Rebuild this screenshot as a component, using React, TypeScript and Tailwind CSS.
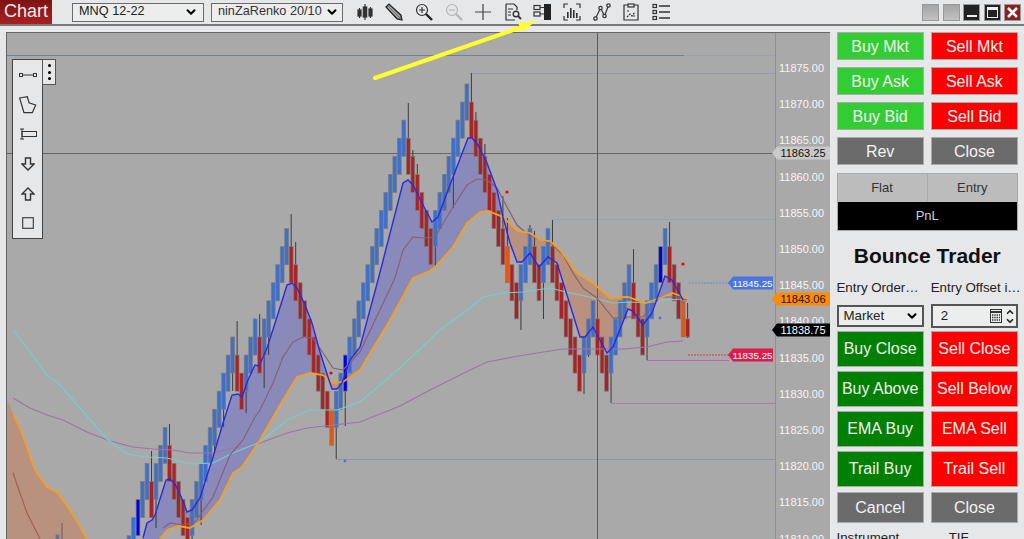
import { ChevronDown, ChevronUp } from "lucide-react";
import type { ReactNode } from "react";

type Pt = [number, number];

// renko brick tops, in steps of one brick from the highest one
const tops = [
  25, 24, 23, 22, 21, 22, 21, 20, 19, 20, 21, 22, 23, 24, 23, 22, 21, 20, 19, 18, 17, 16, 15, 14, 15, 16, 15, 14, 13, 14, 13, 12, 11, 10, 9, 8, 9, 10, 11, 12, 13, 14, 15, 16, 17, 18, 17, 16, 15, 14, 13, 12,
  11, 10, 9, 8, 7, 6, 5, 4, 3, 2, 3, 4, 5, 6, 7, 8, 7, 6, 5, 4, 3, 2, 1, 0, 1, 2, 3, 4, 5, 6, 7, 8, 9,
  10, 11, 10, 9, 8, 9, 10, 9, 8, 9, 10, 11, 12, 13, 14, 15, 14, 13, 12, 13, 14, 15, 14, 13, 12, 11, 10, 11, 12, 13, 12, 11, 10, 9, 8, 9, 10, 11, 12, 13,
];
const wickTop: Record<number, number> = { 5: 451, 9: 424, 24: 321, 29: 314, 36: 214, 37: 242, 62: 103, 63: 150, 64: 164, 76: 73, 77: 112, 79: 144, 83: 196, 84: 218, 89: 225, 90: 231, 94: 220, 112: 249, 120: 222, 124: 303 };
const wickBot: Record<number, number> = { 6: 528, 14: 545, 16: 525, 19: 451, 21: 427, 23: 391, 26: 413, 30: 388, 31: 355, 46: 459, 47: 410, 48: 426, 68: 267, 72: 208, 87: 330, 92: 319, 101: 394, 102: 357, 107: 403, 115: 360, 124: 338 };
const bright = [2, 48, 118];
const hot = [45, 84, 123];

const blue: Pt[] = [[6, 620], [130, 620], [143, 538], [147, 523], [152, 520], [155, 515], [166, 480], [170, 479], [175, 484], [183, 501], [187, 512], [192, 510], [200, 498], [205, 482], [213, 457], [223, 423], [232, 395], [238, 394], [242, 397], [248, 380], [255, 365], [259, 366], [267, 348], [277, 317], [287, 285], [292, 283], [297, 288], [305, 305], [312, 323], [320, 352], [328, 377], [332, 389], [337, 389], [342, 383], [350, 360], [360, 347], [378, 280], [403, 183], [408, 180], [413, 185], [422, 203], [432, 222], [438, 217], [453, 177], [468, 138], [472, 138], [478, 145], [487, 163], [497, 190], [503, 217], [510, 243], [517, 262], [522, 262], [530, 253], [539, 267], [548, 257], [557, 263], [580, 337], [585, 337], [593, 327], [607, 353], [613, 347], [628, 309], [633, 311], [643, 325], [652, 313], [665, 276], [672, 280], [683, 300]];
const orange: Pt[] = [[6, 398], [13, 413], [22, 433], [35, 470], [47, 487], [58, 493], [72, 513], [87, 539], [110, 620], [150, 620], [160, 539], [167, 530], [178, 526], [190, 528], [203, 520], [220, 500], [233, 473], [242, 467], [260, 440], [283, 400], [297, 377], [310, 373], [323, 375], [333, 383], [343, 382], [360, 370], [390, 320], [413, 278], [430, 271], [435, 267], [453, 247], [467, 223], [480, 212], [488, 211], [503, 217], [517, 231], [530, 233], [540, 240], [550, 241], [560, 250], [577, 273], [593, 283], [610, 298], [628, 297], [645, 303], [660, 298], [672, 293], [687, 298]];
const mid: Pt[] = [[163, 528], [170, 523], [183, 525], [195, 522], [213, 497], [230, 455], [243, 440], [255, 417], [260, 410], [273, 383], [283, 357], [293, 342], [303, 337], [313, 338], [323, 353], [333, 368], [343, 370], [360, 352], [395, 278], [403, 250], [413, 237], [423, 238], [435, 237], [453, 207], [467, 185], [477, 179], [487, 180], [497, 188], [507, 207], [517, 225], [525, 232], [540, 240], [550, 242], [563, 255], [573, 273], [583, 288], [597, 298], [613, 318], [625, 317], [643, 317], [660, 297], [677, 297], [687, 300]];
const midLeft: Pt[] = [[13, 473], [27, 513], [40, 539]];
const cyan: Pt[] = [[13, 330], [30, 352], [47, 375], [58, 383], [80, 408], [107, 439], [127, 454], [147, 457], [167, 458], [190, 464], [213, 463], [233, 453], [260, 442], [287, 420], [310, 410], [337, 410], [360, 402], [400, 368], [440, 330], [470, 308], [483, 297], [503, 293], [523, 292], [550, 288], [570, 293], [590, 297], [613, 303], [630, 302], [647, 303], [663, 300], [683, 299]];
const purple: Pt[] = [[13, 398], [30, 408], [47, 415], [63, 420], [87, 432], [110, 441], [133, 447], [153, 449], [173, 450], [190, 453], [213, 453], [233, 448], [260, 443], [287, 433], [307, 428], [360, 422], [400, 406], [430, 390], [470, 370], [487, 362], [513, 357], [537, 353], [563, 349], [597, 349], [623, 349], [647, 347], [667, 342], [683, 341]];

const yAt = (line: Pt[], x: number) => {
  for (let i = 1; i < line.length; i++) {
    if (x <= line[i][0]) {
      const [x0, y0] = line[i - 1];
      const [x1, y1] = line[i];
      return y0 + ((y1 - y0) * (x - x0)) / (x1 - x0);
    }
  }
  return line[line.length - 1][1];
};
const toPoints = (line: Pt[]) => line.map((p) => p.join(",")).join(" ");

// cloud between the fast line and the orange line, split where they cross
const clouds = () => {
  const out: { up: boolean; points: string }[] = [];
  let upper: Pt[] = [];
  let lower: Pt[] = [];
  let state: boolean | null = null;
  for (let x = 6; x <= 684; x++) {
    const a = yAt(blue, x);
    const b = yAt(orange, x);
    const up = a < b;
    if (state !== null && up !== state) {
      out.push({ up: state, points: toPoints([...upper, ...[...lower].reverse()]) });
      upper = [upper[upper.length - 1]];
      lower = [lower[lower.length - 1]];
    }
    state = up;
    upper.push([x, a]);
    lower.push([x, b]);
  }
  out.push({ up: !!state, points: toPoints([...upper, ...[...lower].reverse()]) });
  return out;
};

const axis = [11875, 11870, 11865, 11860, 11855, 11850, 11845, 11840, 11835, 11830, 11825, 11820, 11815, 11810];

function Tag({ y, x, w, fill, color, text, size = 11 }: { y: number; x: number; w: number; fill: string; color: string; text: string; size?: number }) {
  return (
    <g>
      <polygon points={`${x},${y} ${x + 5},${y - 6.5} ${x + w},${y - 6.5} ${x + w},${y + 6.5} ${x + 5},${y + 6.5}`} fill={fill} />
      <text x={x + w / 2 + 2} y={y + 4} textAnchor="middle" fontSize={size} fill={color}>{text}</text>
    </g>
  );
}

function Chart() {
  return (
    <svg width="824" height="507" viewBox="6 32 824 507" className="block">
      {clouds().map((c, i) => (
        <polygon key={i} points={c.points} fill={c.up ? "#8a8aba" : "#b9917f"} />
      ))}
      <line x1="7" y1="55.5" x2="684" y2="55.5" stroke="#6f8296" />
      <line x1="684" y1="55.5" x2="775" y2="55.5" stroke="#9aa2ad" />
      <line x1="472" y1="73.5" x2="775" y2="73.5" stroke="#8f9db0" />
      <line x1="553" y1="219.5" x2="775" y2="219.5" stroke="#8fa3bd" />
      <line x1="689" y1="283" x2="729" y2="283" stroke="#6f86c8" strokeDasharray="2 1" />
      <line x1="688" y1="355" x2="729" y2="355" stroke="#e0304c" strokeDasharray="2 1" />
      <line x1="647" y1="360.5" x2="729" y2="360.5" stroke="#c060c0" />
      <line x1="611" y1="403.5" x2="775" y2="403.5" stroke="#a5809f" />
      <line x1="336" y1="459.5" x2="775" y2="459.5" stroke="#8e97a6" />

      <line x1="7" y1="153.5" x2="775" y2="153.5" stroke="#666666" />
      <line x1="597.5" y1="32" x2="597.5" y2="539" stroke="#5c5c5c" />

      <rect x="56" y="535" width="3" height="6" fill="#3b6fc9" stroke="#808080" />
      <line x1="62" y1="523" x2="62" y2="539" stroke="#6b5a5a" />
      {tops.map((n, i) => {
        const x = 129 + 4.505 * i;
        const top = 84 + 18.07 * n;
        const last = i === tops.length - 1;
        const bottom = top + (last ? 18 : 36.1);
        const down = i > 0 && n > tops[i - 1];
        const fill = bright.includes(i) ? "#0000e6" : hot.includes(i) ? "#e8560f" : down ? "#ac2222" : "#3c70d0";
        return (
          <g key={i}>
            {wickTop[i] && <line x1={x} y1={wickTop[i]} x2={x} y2={top} stroke="#3c3c3c" />}
            {wickBot[i] && <line x1={x} y1={bottom} x2={x} y2={wickBot[i]} stroke="#3c3c3c" />}
            <rect x={x - 1.9} y={top} width="3.8" height={bottom - top} fill={fill} stroke="#7c7c7c" strokeWidth="0.7" />
          </g>
        );
      })}

      <polyline points={toPoints(purple)} fill="none" stroke="#a271a8" strokeWidth="1.2" />
      <polyline points={toPoints(cyan)} fill="none" stroke="#6fd0d0" strokeWidth="1.2" />
      <polyline points={toPoints(mid)} fill="none" stroke="#8a5f74" strokeWidth="1.2" />
      <polyline points={toPoints(midLeft)} fill="none" stroke="#a5604f" strokeWidth="1.2" />
      <polyline points={toPoints(orange.slice(1))} fill="none" stroke="#f59e20" strokeWidth="1.8" />
      <polyline points={toPoints(blue.slice(2))} fill="none" stroke="#2a2ae0" strokeWidth="1.4" />

      <circle cx="507" cy="192" r="1.6" fill="#f00000" />
      <circle cx="683" cy="264" r="1.6" fill="#f00000" />
      <circle cx="331" cy="373" r="1.6" fill="#f00000" />
      <circle cx="660" cy="318" r="1.4" fill="#4a74e0" />
      <circle cx="345" cy="461" r="1.4" fill="#4a74e0" />

      <line x1="775.5" y1="32" x2="775.5" y2="539" stroke="#8f8f8f" />
      <g fontSize="11" fill="#f5f5f5">
        {axis.map((p, i) => (
          <text key={p} x="779" y={72 + i * 36.2}>{p.toFixed(2)}</text>
        ))}
      </g>
      <Tag y={283} x={728} w={45} fill="#4a74e0" color="#ffffff" text="11845.25" size={9.8} />
      <Tag y={355} x={728} w={45} fill="#dc1c4c" color="#ffffff" text="11835.25" size={9.8} />
      <Tag y={153} x={772} w={58} fill="#c9c9c9" color="#111111" text="11863.25" size={11} />
      <Tag y={299} x={772} w={58} fill="#ff8c00" color="#111111" text="11843.06" size={11} />
      <Tag y={330} x={772} w={58} fill="#000000" color="#ffffff" text="11838.75" size={11} />
    </svg>
  );
}

const Draw = ({ w = 18, h = 18, children }: { w?: number; h?: number; children: ReactNode }) => (
  <svg width={w} height={h} viewBox={`0 0 ${w} ${h}`} fill="none" stroke="#333" strokeWidth="1.2">{children}</svg>
);

const toolbarIcons: ReactNode[] = [
  <Draw key="candles">
    <path d="M3.5 5v10M9 1v16M14.5 4v11" stroke="#333" />
    <rect x="2" y="7" width="3" height="6" fill="#333" />
    <rect x="7.3" y="4" width="3.4" height="10" fill="#333" />
    <rect x="13" y="6" width="3" height="7" fill="#333" />
  </Draw>,
  <Draw key="pencil">
    <path d="M1 4 4 1l12 11 1 5-5-1z" fill="#777" stroke="#222" />
    <path d="M3.5 2.5 15 13.5M2.5 4 13.5 15" stroke="#ddd" strokeWidth="0.7" />
  </Draw>,
  <Draw key="zoomin">
    <circle cx="7" cy="7" r="5.5" />
    <path d="M4 7h6M7 4v6" />
    <path d="m11 11 6 6" strokeWidth="2.4" stroke="#222" />
  </Draw>,
  <Draw key="zoomout">
    <circle cx="7" cy="7" r="5.5" stroke="#b5b5b5" />
    <path d="M4 7h6" stroke="#b5b5b5" />
    <path d="m11 11 6 6" strokeWidth="2.4" stroke="#b5b5b5" />
  </Draw>,
  <Draw key="plus" w={16} h={16}>
    <path d="M8 0v16M0 8h16" stroke="#444" />
  </Draw>,
  <Draw key="docsearch">
    <path d="M2 1h8l3 3v3M2 1v16h9" />
    <path d="M4 6h5M4 9h3M4 12h3" />
    <circle cx="12" cy="11" r="2.8" strokeWidth="1.4" />
    <path d="m14 13 3 3" strokeWidth="1.8" />
  </Draw>,
  <Draw key="dom">
    <rect x="11" y="1" width="7" height="16" fill="#222" stroke="none" />
    <rect x="1" y="2.5" width="6" height="4" />
    <rect x="1" y="9" width="6" height="4" />
    <path d="M7 4.5h4M7 11h4" />
  </Draw>,
  <Draw key="bars">
    <path d="M1 5V1h4M13 1h4v4M17 13v4h-4M5 17H1v-4" />
    <rect x="4" y="9" width="1.6" height="6" fill="#333" stroke="none" />
    <rect x="7" y="5" width="1.6" height="10" fill="#333" stroke="none" />
    <rect x="10" y="7" width="1.6" height="8" fill="#333" stroke="none" />
    <rect x="13" y="10" width="1.6" height="5" fill="#333" stroke="none" />
  </Draw>,
  <Draw key="nodes">
    <path d="M2.5 15.5 7.5 5l4 8 4-10.5" />
    <circle cx="2.5" cy="15.5" r="1.7" fill="#e6e7e9" />
    <circle cx="7.5" cy="5" r="1.7" fill="#e6e7e9" />
    <circle cx="11.5" cy="13" r="1.7" fill="#e6e7e9" />
    <circle cx="15.5" cy="2.5" r="1.7" fill="#e6e7e9" />
  </Draw>,
  <Draw key="clip" w={16} h={18}>
    <path d="M5 2H1v15h14V2h-4" />
    <rect x="5" y="1" width="6" height="3" />
    <path d="m4 14 3-3 2 2 3-4" strokeDasharray="2 1" />
    <path d="M4 8h2M10 13h2" />
  </Draw>,
  <Draw key="list">
    <rect x="1" y="1.5" width="3.5" height="3" />
    <rect x="1" y="7.5" width="3.5" height="3" />
    <rect x="1" y="13.5" width="3.5" height="3" />
    <path d="M7 3h11M7 9h11M7 15h11" strokeWidth="1.4" />
  </Draw>,
];

function SelectBox({ label, className }: { label: string; className: string }) {
  return (
    <div className={`flex items-center justify-between whitespace-nowrap border border-[#6b6b6b] bg-[#eceded] text-[#222] ${className}`}>
      <span>{label}</span>
      <ChevronDown size={14} strokeWidth={3.5} className="shrink-0 text-black" />
    </div>
  );
}

function WinButton({ dark, red, children }: { dark?: boolean; red?: boolean; children?: ReactNode }) {
  const tone = red ? "bg-[#8f1f1f]" : dark ? "bg-[#222]" : "bg-gradient-to-b from-[#a5a5a5] to-[#c2c2c2]";
  return <div className={`flex h-[17px] w-[17px] items-center justify-center border border-[#999] ${tone}`}>{children}</div>;
}

function Btn({ label, tone, h }: { label: string; tone: string; h: string }) {
  return <div className={`flex items-center justify-center border border-[#aaa] text-[16px] text-[#f2f2f2] ${tone} ${h}`}>{label}</div>;
}

const palette: ReactNode[] = [
  <svg key="line" width="18" height="6" viewBox="0 0 18 6" fill="none" stroke="#333"><rect x="0.5" y="1.5" width="3" height="3" /><rect x="14.5" y="1.5" width="3" height="3" /><path d="M3.5 3h11" /></svg>,
  <svg key="poly" width="18" height="18" viewBox="0 0 18 18" fill="none" stroke="#333" strokeWidth="1.2"><path d="M.6 2 8.3.7 10 6.7l6.7 2.3-3.4 7.7H5z" /></svg>,
  <svg key="ibeam" width="18" height="12" viewBox="0 0 18 12" fill="none" stroke="#333"><path d="M1 1h4M1 11h4M3 1v10" /><rect x="3" y="3.5" width="14.5" height="5" /></svg>,
  <svg key="down" width="14" height="14" viewBox="0 0 14 14" fill="none" stroke="#333" strokeWidth="1.4"><path d="M4.5 1h5v6H13l-6 6-6-6h3.5z" /></svg>,
  <svg key="up" width="14" height="14" viewBox="0 0 14 14" fill="none" stroke="#333" strokeWidth="1.4"><path d="M4.5 13h5V7H13L7 1 1 7h3.5z" /></svg>,
  <svg key="square" width="12" height="12" viewBox="0 0 12 12" fill="none" stroke="#444" strokeWidth="1.2"><rect x="0.7" y="0.7" width="10.6" height="10.6" /></svg>,
];

export default function App() {
  return (
    <div className="relative flex h-[539px] w-[1024px] flex-col overflow-hidden bg-[#e6e7e9] font-['Liberation_Sans',Arial,sans-serif]">
      <div className="flex h-[26px] shrink-0 items-center border-b-2 border-[#7a7a7a]">
        <div className="mb-[1px] flex h-[24px] w-[52px] items-center justify-center bg-gradient-to-b from-[#7c1414] to-[#a82020] text-[18px] text-[#f4eaea]">Chart</div>
        <SelectBox label="MNQ 12-22" className="ml-[20px] h-[19px] w-[132px] pl-[6px] pr-[5px] text-[12.7px]" />
        <SelectBox label="ninZaRenko 20/10" className="ml-[7px] h-[19px] w-[132px] pl-[6px] pr-[3px] text-[12.7px] text-[#333]" />
        <div className="ml-[7px] flex items-center">
          {toolbarIcons.map((icon, i) => (
            <div key={i} className="flex w-[29.6px] justify-center">{icon}</div>
          ))}
        </div>
        <div className="ml-auto flex gap-[3.5px] pr-[3px]">
          <WinButton />
          <WinButton />
          <WinButton dark><div className="mt-[8px] h-[2px] w-[10px] bg-[#eee]" /></WinButton>
          <WinButton dark><div className="h-[11px] w-[11px] border border-t-[3px] border-[#eee]" /></WinButton>
          <WinButton red>
            <svg width="11" height="11" viewBox="0 0 11 11" stroke="#fff" strokeWidth="2.6"><path d="m1 1 9 9M10 1l-9 9" /></svg>
          </WinButton>
        </div>
      </div>

      <div className="flex min-h-0 flex-1 pl-[6px] pt-[6px]">
        <div className="relative h-[507px] w-[824px] shrink-0 overflow-hidden border-l border-t border-[#666] bg-[#a9a9a9]">
          <div className="-ml-[1px] -mt-[1px]"><Chart /></div>

          <div className="absolute left-[5px] top-[26px] flex">
            <div className="flex h-[180px] w-[31px] flex-col items-center border border-[#444] bg-[#e6e7e9]">
              {palette.map((icon, i) => (
                <div key={i} className="flex h-[29.7px] items-center justify-center">{icon}</div>
              ))}
            </div>
            <div className="-ml-[1px] flex h-[26px] w-[14px] flex-col items-center justify-center gap-[3.5px] border border-[#555] bg-[#e6e7e9]">
              <div className="h-[3px] w-[3px] rounded-full bg-black" />
              <div className="h-[3px] w-[3px] rounded-full bg-black" />
              <div className="h-[3px] w-[3px] rounded-full bg-black" />
            </div>
          </div>
        </div>

        <div className="flex w-[194px] shrink-0 flex-col pl-[6.5px] pr-[6px]">
          <div className="grid grid-cols-2 gap-x-[7px] gap-y-[7px]">
            <Btn label="Buy Mkt" tone="bg-[#32cd32]" h="h-[28px] pt-[1px]" />
            <Btn label="Sell Mkt" tone="bg-[#ff0000]" h="h-[28px] pt-[1px]" />
            <Btn label="Buy Ask" tone="bg-[#32cd32]" h="h-[28px] pt-[1px]" />
            <Btn label="Sell Ask" tone="bg-[#ff0000]" h="h-[28px] pt-[1px]" />
            <Btn label="Buy Bid" tone="bg-[#32cd32]" h="h-[28px] pt-[1px]" />
            <Btn label="Sell Bid" tone="bg-[#ff0000]" h="h-[28px] pt-[1px]" />
            <Btn label="Rev" tone="bg-[#6b6b6b]" h="h-[28px] pt-[1px]" />
            <Btn label="Close" tone="bg-[#6b6b6b]" h="h-[28px] pt-[1px]" />
          </div>

          <div className="mt-[8px] border border-[#aaa] text-[13px]">
            <div className="flex h-[28px] bg-[#bcbcbc] text-[#333]">
              <div className="flex w-[90px] items-center justify-center border-r border-[#aaa]">Flat</div>
              <div className="flex flex-1 items-center justify-center">Entry</div>
            </div>
            <div className="flex h-[28px] items-center justify-center bg-black text-[#ccc]">PnL</div>
          </div>

          <div className="mt-[12px] text-center text-[21px] font-bold leading-[26px] text-[#111]">Bounce Trader</div>

          <div className="mt-[9px] grid grid-cols-2 gap-x-[7px] whitespace-nowrap text-[13.3px] leading-[20px] text-[#222]">
            <div>Entry Order…</div>
            <div>Entry Offset i…</div>
          </div>

          <div className="mt-[6px] grid grid-cols-2 items-center gap-x-[7px] text-[13.3px] text-[#222]">
            <div className="flex h-[22px] items-center justify-between border-2 border-[#555] bg-[#eceded] pl-[5px] pr-[3px]">
              <span>Market</span>
              <ChevronDown size={14} strokeWidth={3.5} className="text-black" />
            </div>
            <div className="flex h-[24px] items-center justify-between border-2 border-[#555] bg-[#eceded] pl-[8px] pr-[1px]">
              <span>2</span>
              <div className="flex items-center gap-[3px]">
                <svg width="12" height="14" viewBox="0 0 12 14" stroke="#333"><rect x="0.5" y="0.5" width="11" height="13" fill="none" /><path d="M1 3h10" strokeWidth="2" /><path d="M2 6h8M2 8.5h8M2 11h8" strokeWidth="1.4" strokeDasharray="1.4 0.9" /></svg>
                <div className="flex flex-col">
                  <ChevronUp size={10} strokeWidth={4} className="-mb-[1px] text-[#222]" />
                  <ChevronDown size={10} strokeWidth={4} className="text-[#222]" />
                </div>
              </div>
            </div>
          </div>

          <div className="mt-[3px] grid grid-cols-2 gap-x-[7px] gap-y-[4px]">
            <Btn label="Buy Close" tone="bg-[#008000]" h="h-[36px]" />
            <Btn label="Sell Close" tone="bg-[#ff0000]" h="h-[36px]" />
            <Btn label="Buy Above" tone="bg-[#008000]" h="h-[36px]" />
            <Btn label="Sell Below" tone="bg-[#ff0000]" h="h-[36px]" />
            <Btn label="EMA Buy" tone="bg-[#008000]" h="h-[36px]" />
            <Btn label="EMA Sell" tone="bg-[#ff0000]" h="h-[36px]" />
            <Btn label="Trail Buy" tone="bg-[#008000]" h="h-[36px]" />
            <Btn label="Trail Sell" tone="bg-[#ff0000]" h="h-[36px]" />
            <Btn label="Cancel" tone="bg-[#6b6b6b]" h="h-[31px] mt-[1px]" />
            <Btn label="Close" tone="bg-[#6b6b6b]" h="h-[31px] mt-[1px]" />
          </div>

          <div className="mt-[5px] grid grid-cols-2 gap-x-[7px] text-[13.3px] leading-[20px] text-[#222]">
            <div>Instrument</div>
            <div className="pl-[18px]">TIF</div>
          </div>
        </div>
      </div>

      {/* yellow annotation arrow, drawn over toolbar and chart */}
      <svg width="175" height="70" viewBox="370 15 175 70" className="absolute left-[370px] top-[15px]">
        <line x1="375" y1="78" x2="522" y2="27" stroke="#ffff2e" strokeWidth="4" strokeLinecap="round" />
        <polygon points="518,23 536,21 522,32" fill="#ffff2e" />
      </svg>
    </div>
  );
}
